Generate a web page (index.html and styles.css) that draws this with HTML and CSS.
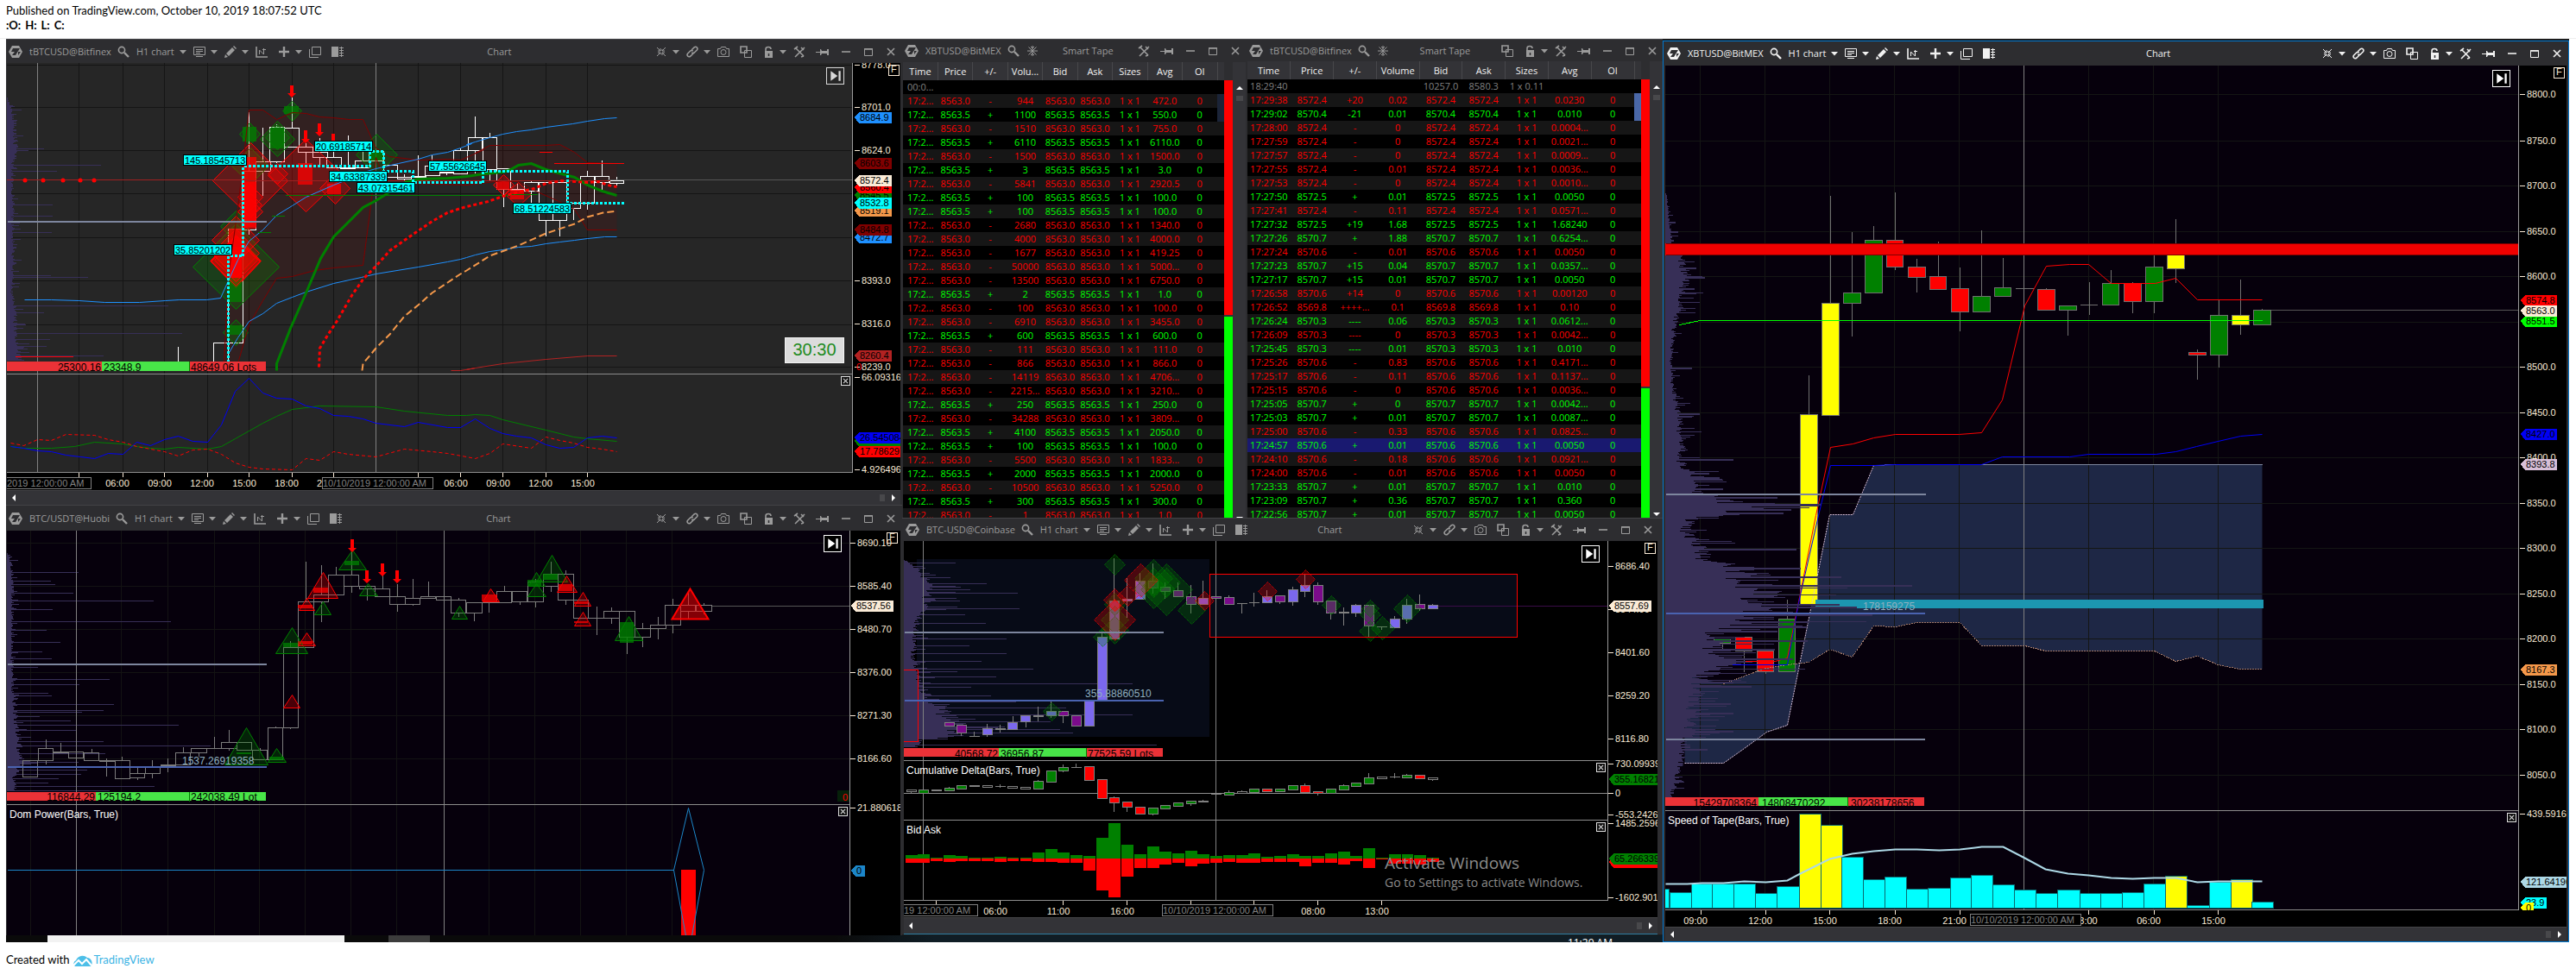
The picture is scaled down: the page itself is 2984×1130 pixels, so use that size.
FILE: index.html
```html
<!DOCTYPE html>
<html lang="en">
<head>
<meta charset="utf-8">
<title>BTC workspace</title>
<meta name="viewport" content="width=device-width, initial-scale=1">
<link rel="stylesheet" href="styles.css">
</head>
<body>
<svg class="sprite" aria-hidden="true">
  <symbol id="i-logo" viewBox="0 0 16 16"><path fill="currentColor" d="M4 1h8l4 7-4 7H4L0 8z"/><path class="cut" d="M5 4h8L8 12H4l3-4H3zM11 8h3l-3 4"/></symbol>
  <symbol id="i-search" viewBox="0 0 14 14"><circle class="st2" cx="5" cy="5" r="3.6"/><path class="st3" d="M8 8l5 5"/></symbol>
  <symbol id="i-caret" viewBox="0 0 8 14"><path fill="currentColor" d="M0 5h8L4 9.500z"/></symbol>
  <symbol id="i-screen" viewBox="0 0 14 14"><path class="st" d="M.5 1.500h13v9H.5zM3 12.500h8M3 4.500h8M3 6.500h8M3 8.500h5"/></symbol>
  <symbol id="i-pencil" viewBox="0 0 14 14"><path fill="currentColor" d="M0 14l1-4 3 3zM2 9l7-7 3 3-7 7zM10 1l1-1 3 3-1 1z"/></symbol>
  <symbol id="i-chart" viewBox="0 0 14 14"><path class="st2" d="M1 1v12h13"/><path class="st" d="M4.500 10V5l5 5V3M8 4.500h4"/></symbol>
  <symbol id="i-plus" viewBox="0 0 14 14"><path class="st3" d="M7 1v12M1 7h12"/></symbol>
  <symbol id="i-copies" viewBox="0 0 14 14"><path class="st" d="M3.500 1.500h10v9h-10zM.5 4v9.500H11"/></symbol>
  <symbol id="i-layout" viewBox="0 0 14 14"><path fill="currentColor" d="M0 1h8v12H0z"/><path class="st" d="M9 2.500h5M9 5.500h5M9 8.500h5M9 11.500h5M11.500 1v12"/></symbol>
  <symbol id="i-spark" viewBox="0 0 14 14"><path class="st" d="M2 2l4 4M12 12L8 8M12 2L8 6M2 12l4-4M6 3v3H3M8 11V8h3M8 4v2h3M6 10V8H3"/></symbol>
  <symbol id="i-link" viewBox="0 0 14 14"><path class="st2" d="M6 5l3-3q2-1.500 3.300 0t0 3l-3 3q-1.500 1-3 0M8 9l-3 3q-2 1.500-3.300 0t0-3l3-3q1.500-1 3 0"/></symbol>
  <symbol id="i-camera" viewBox="0 0 14 14"><path class="st" d="M.5 3.500h3l1-2h5l1 2h3v9H.5z"/><circle class="st" cx="7" cy="7.500" r="3"/></symbol>
  <symbol id="i-wins" viewBox="0 0 14 14"><path class="st2" d="M1 1h7v7H1z"/><path class="st" d="M5.500 5.500h8v8h-8z"/></symbol>
  <symbol id="i-lock" viewBox="0 0 14 14"><path class="st2" d="M4 7V4q0-2.500 3-2.500T10 4"/><path fill="currentColor" d="M3 6h9v8H3z"/><path class="cutst" d="M7.500 9v3"/></symbol>
  <symbol id="i-tools" viewBox="0 0 14 14"><path class="st2" d="M1 4l4-3M3 3l9 9M13 2L2 13M9 2l3 3M9 13l3-1"/></symbol>
  <symbol id="i-pin" viewBox="0 0 16 14"><path fill="currentColor" d="M0 7h5V4h1l1 2h6V4h2v7h-2V9H7l-1 2H5V8H0z"/></symbol>
  <symbol id="i-min" viewBox="0 0 14 14"><path class="st2" d="M2 7h10"/></symbol>
  <symbol id="i-max" viewBox="0 0 14 14"><path class="st" d="M2.500 3.500h9v8h-9z"/><path class="st2" d="M2 4h10"/></symbol>
  <symbol id="i-close" viewBox="0 0 14 14"><path class="st2" d="M3 3l8 8M11 3l-8 8"/></symbol>
  <symbol id="i-snow" viewBox="0 0 14 14"><path class="st" d="M7 1v12M1 7h12M2.500 2.500l9 9M11.500 2.500l-9 9M5 2l2 2 2-2M5 12l2-2 2 2"/></symbol>
  <symbol id="i-end" viewBox="0 0 14 14"><path fill="currentColor" d="M2 2l7 5-7 5zM10 2h2v10h-2z"/></symbol>
</svg>

<header class="published">
  <p>Published on TradingView.com, October 10, 2019 18:07:52 UTC</p>
  <p class="ohlc"><span>:O:</span><span>H:</span><span>L:</span><span>C:</span></p>
</header>

<main class="desktop">
  <div class="column">
    <section class="win chart-win win-bitfinex" data-chart="bitfinex" data-symbol="tBTCUSD@Bitfinex"></section>
    <section class="win chart-win win-huobi" data-chart="huobi" data-symbol="BTC/USDT@Huobi"></section>
  </div>
  <div class="column">
    <div class="tapes">
      <section class="win tape tape-bitmex" data-tape="bitmex" data-symbol="XBTUSD@BitMEX"></section>
      <section class="win tape tape-bitfinex" data-tape="bitfinex" data-symbol="tBTCUSD@Bitfinex"></section>
    </div>
    <section class="win chart-win win-coinbase" data-chart="coinbase" data-symbol="BTC-USD@Coinbase"></section>
  </div>
  <section class="win chart-win win-bitmex active" data-chart="bitmex" data-symbol="XBTUSD@BitMEX"></section>
  <div class="taskbar"><span class="search-box"></span><span class="task"></span><span class="clock">11:29 AM</span></div>
</main>

<footer class="created">Created with
  <a href="#tradingview"><svg class="cloud" viewBox="0 0 24 16" aria-hidden="true"><path d="M3 15a4 4 0 0 1 1-7 8 8 0 0 1 13-3 6 6 0 0 1 4 10z"/><path class="cloud-line" d="M1 14l6-6 4 4 5-5 6 7"/></svg>TradingView</a>
</footer>
<script src="app.js"></script>
</body>
</html>
```
FILE: styles.css
```css
* { box-sizing: border-box; }
body { margin: 0; background: #fff; font-family: "Open Sans", "Noto Sans", sans-serif; font-size: 11px; color: #000; }
p { margin: 0; }
.sprite { display: none; }
button { border: 0; padding: 0; background: none; color: inherit; font: inherit; display: flex; align-items: center; }

.published { padding: 4px 7px 6px; border-bottom: 1px solid #eee; font: 13px/17px Lato, sans-serif; }
.ohlc { font-weight: 700; display: flex; gap: 5px; }
.created { padding: 12px 7px 8px; font: 13px/17px Lato, sans-serif; display: flex; gap: 4px; }
.created a { color: #3bb3e4; text-decoration: none; display: flex; align-items: center; }
.cloud { width: 24px; height: 16px; fill: #4dbfe8; }
.cloud .cloud-line { fill: none; stroke: #fff; stroke-width: 2; }

.desktop { display: grid; grid-template-columns: 1038fr 881fr 1050fr; grid-template-rows: auto 8px; margin: 0 8px 0 7px; background: #1c1c1d; }
.column { display: flex; flex-direction: column; min-width: 0; }
.tapes { display: grid; grid-template-columns: 398fr 483fr; height: 555px; overflow: hidden; background: #3a3a3d; }

/* window frame */
.win { background: #2d2d30; border-top: 1px solid #434346; color: #9b9b9b; display: flex; flex-direction: column; min-width: 0; padding: 0 2px 0 1px; --cut: #2d2d30; }
.win.active { color: #f1f1f1; border: 1px solid #0078d0; grid-row: 1 / 3; grid-column: 3; margin-top: 2px; padding: 0 2px; }
.bar { display: flex; align-items: center; padding: 0 4px 0 2px; }
.bar .left, .bar .right { display: flex; align-items: center; gap: 12px; }
.bar .title { flex: 1; text-align: center; white-space: nowrap; line-height: 16px; }
.bar .logo { width: 16px; height: 16px; margin-right: -4px; }
.bar .symbol { white-space: nowrap; line-height: 16px; }
.bar .search { margin-left: -5px; margin-right: -4px; }
.bar .caret { margin-left: -6px; margin-right: -4px; }
.icon { width: 14px; height: 14px; display: block; color: inherit; }
.icon.narrow { width: 8px; }
.icon.wide { width: 16px; }
.icon.big { width: 16px; height: 16px; }
.st, .st2, .st3 { fill: none; stroke: currentColor; stroke-width: 1; }
.st2 { stroke-width: 1.6; }
.st3 { stroke-width: 2.4; }
.cut { fill: var(--cut); }
.cutst { stroke: var(--cut); stroke-width: 1.5; }

.win-bitfinex .bar { height: 27px; }
.win-huobi .bar { height: 29px; }
.win-coinbase .bar { height: 26px; }
.win-bitmex .bar { height: 28px; }
.win-coinbase { padding: 0 6px 0 2px; }

/* chart body */
.chart { display: grid; grid-template-columns: 1fr auto; background: #000; }
.plot { position: relative; min-width: 0; background: var(--bg); border-right: 1px solid #9a9a9a; overflow: hidden; }
.plot svg { display: block; width: 100%; height: 100%; }
.axis, .times { display: block; }
.axis { width: var(--axis); height: 100%; grid-column: 2; }
.times { width: 100%; height: 100%; grid-column: 1 / 3; }
.win-bitfinex .chart { --bg: #262626; --grid: #151515; --axis: 55px; --out: #fff; grid-template-rows: 475px 20px; }
.win-huobi .chart { --bg: #06000c; --grid: #131313; --axis: 58px; --out: #7c7c7c; grid-template-rows: 469px; }
.win-coinbase .chart { --bg: #000; --grid: #000; --axis: 57px; --out: #808080; grid-template-rows: 417px 19px; }
.win-bitmex .chart { --bg: #06000c; --grid: #141614; --axis: 55px; --out: #707070; grid-template-rows: 979px 19px; }

.end-btn, .shut, .timer { position: absolute; }
.end-btn { right: 9px; top: 5px; width: 21px; height: 20px; border: 1px solid #fff; background: #000; color: #fff; justify-content: center; }
.win-bitfinex .end-btn { background: #262626; border-color: #d8d8d8; color: #d8d8d8; }
.shut { right: 2px; width: 11px; height: 11px; border: 1px solid #ddd; color: #ddd; background: #111; justify-content: center; }
.plot .shut .icon { width: 11px; height: 11px; }
.plot .end-btn .icon { width: 16px; height: 16px; }
.shut-a { top: 363px; } .shut-b { top: 320px; } .shut-c { top: 257px; } .shut-d { top: 326px; } .shut-e { top: 866px; }
.timer { right: 9px; top: 318px; width: 69px; height: 30px; background: #dcdcdc; color: #228b22; border: 1px solid #f4f4f4; font: 20px/26px "Liberation Sans", Arial, sans-serif; text-align: center; }
.watermark { position: absolute; right: 18px; bottom: 11px; color: #8b8b8b; width: 240px; }
.watermark b { display: block; font-weight: 400; font-size: 19px; line-height: 26px; }
.watermark span { font-size: 14px; line-height: 20px; white-space: nowrap; }

.hscroll { display: flex; align-items: center; justify-content: space-between; background: #333337; border-top: 1px solid #434346; color: #fff; padding: 0 6px; height: 17px; }
.win-coinbase .hscroll { height: 20px; border-bottom: 1px solid #2a7fa5; }
.win-bitmex .hscroll { height: 17px; }
.hscroll i { margin-left: auto; width: 6px; height: 8px; background: #48484b; margin-right: 8px; }
.arrow { width: 0; height: 0; border: 4px solid transparent; }
.arrow-l { border-right-color: #fff; border-left-width: 0; }
.arrow-r { border-left-color: #fff; border-right-width: 0; }
.arrow-u { border-bottom-color: #fff; border-top-width: 0; }
.arrow-d { border-top-color: #fff; border-bottom-width: 0; }

/* drawing primitives; --c carries the colour */
svg text { font: 11px "Liberation Sans", Arial, sans-serif; fill: var(--c, #faebd7); }
svg text.t12 { font-size: 12px; }
.ln, .bx, .grid, .sess, .div { shape-rendering: crispEdges; }
.grid { stroke: var(--grid); stroke-width: 1; fill: none; }
.sess, .div { stroke: #808080; fill: none; }
.div { stroke: #8c8c8c; }
.ln { fill: none; stroke: var(--c); }
.smooth { shape-rendering: auto; }
.w2 { stroke-width: 2; } .w3 { stroke-width: 3; }
.d3 { stroke-dasharray: 4 3; } .d2 { stroke-dasharray: 3 2; } .d8 { stroke-dasharray: 8 4; } .d1 { stroke-dasharray: 2 1; }
.bx { fill: var(--c); }
.half { fill-opacity: .75; }
.frame { stroke: var(--edge, #000); }
.bar-edge { --edge: #0a6a70; }
.hollow { fill: none; stroke: var(--out); shape-rendering: crispEdges; }
.candle { fill: var(--c); stroke: var(--out); shape-rendering: crispEdges; }
.dia, .tri { fill: var(--c); fill-opacity: .27; stroke: var(--c); stroke-width: 1; }
.strong { fill-opacity: .5; stroke-width: 2; }
.dots .dia { stroke-dasharray: 1 1; }
.cloudfill { fill: #1e2745; }
.haze { fill: rgba(128, 0, 0, .13); }
.red { --c: #f00; } .green { --c: #008000; } .lime { --c: #0f0; } .cyan { --c: #0ff; } .blue { --c: #0000f5; }
.sky { --c: #1e90ff; } .maroon { --c: #800000; } .brick { --c: #b22222; } .orange { --c: #f4984a; } .cream { --c: #faebd7; }
.black { --c: #000; } .gray { --c: #808080; } .dim { --c: #555; } .yellow { --c: #ff0; } .lav { --c: #7d869e; } .indigo { --c: #4a63b0; }
.steel { --c: #8fb0c0; } .slate { --c: #7b68ee; } .purple { --c: #7b0b8b; } .thistle { --c: #d8bfd8; } .ice { --c: #add8e6; }
.azure { --c: #1c86c8; } .teal { --c: #1c96b0; } .vred { --c: #eb3237; } .vgreen { --c: #48e548; } .navy { --c: #070b17; } .plum { --c: #3a0c48; }
.prof { --c: #372f57; } .tan { --c: #a07868; } .white { --c: #fff; } .crimson { --c: #a02020; } .deepred { --c: #f00000; } .deepgreen { --c: #06200a; }

/* tapes */
.tape { padding: 0 0 0 1px; }
.tape-bitfinex { padding-left: 2px; margin-bottom: 5px; }
.tape .bar { height: 26px; padding-right: 5px; flex: none; }
.tape-bitfinex .bar { height: 25px; }
.tape .body { display: flex; flex: 1; min-height: 0; overflow: hidden; }
.tape .rows { flex: 1; min-width: 0; overflow: hidden; background: #000; }
.tape table { width: 100%; border-collapse: collapse; table-layout: fixed; font-size: 11px; text-align: center; }
.tape th { height: 21px; padding: 0; font-weight: 400; color: #f1f1f1; background: #333337; border-right: 1px solid #48484b; line-height: 20px; overflow: hidden; white-space: nowrap; text-overflow: ellipsis; }
.tape th:last-child, .tape td:last-child { width: 8px; border: 0; }
.tape td { height: 16px; padding: 0; line-height: 16px; white-space: nowrap; overflow: hidden; color: var(--c); }
.tape tbody tr:nth-child(even) { background: #161616; }
.tape tbody tr.q { --c: #808080; }
.tape tbody tr.up { --c: #0f0; }
.tape tbody tr.down { --c: #f00; }
.tape tbody tr.sel { background: #191970; }
.tape tr.mark td:last-child { background: #4a68a8; }
.tape-bitmex tr.mark td:last-child { background: #1b2438; }
.ratio { width: 10px; display: flex; flex-direction: column; gap: 2px; margin-top: 21px; background: #333337; }
.ratio .r { background: #f00; } .ratio .g { background: #0f0; }
.tape-bitmex .r { flex: 267; } .tape-bitmex .g { flex: 238; }
.tape-bitfinex .r { flex: 350; } .tape-bitfinex .g { flex: 151; }
.vscroll { width: 15px; background: #333337; display: flex; flex-direction: column; align-items: center; padding: 28px 0 6px; }
.vscroll i { width: 8px; height: 6px; background: #48484b; margin: 7px 0 auto; }

.taskbar { grid-column: 1 / 3; grid-row: 2; display: flex; overflow: hidden; background: linear-gradient(90deg, #0a0a0a 50%, #101d25 56%); padding-left: 48px; height: 8px; }
.search-box { width: 344px; background: #f2f2f2; }
.task { width: 48px; margin-left: 51px; background: #3c3c3c; }
.clock { margin-left: auto; margin-right: 58px; padding-top: 3px; color: #fff; font-size: 12px; line-height: 12px; }
```
FILE: app.js
```js
// Digitised sample spaces: [x scale, y scale, x origin, y origin].
const SPACE = {
  a: [2.8, 2.6576, 0, 0], b: [3, 2.8, 540, 40],
  c: [2.8, 2.877, 0, 585], d: [3, 2.877, 540, 585],
  e: [3, 3, 1040, 595], f: [3, 3, 1490, 595],
  g: [2.904, 2.8, 1920, 40], h: [2.882, 2.8, 2440, 40], i: [1.4737, 3, 1920, 595]
};
const X = (s, x) => Math.round(x / SPACE[s][0] + SPACE[s][2]);
const Y = (s, y) => Math.round(y / SPACE[s][1] + SPACE[s][3]);
// "a 1,2 3,4|b 5,6" -> point list
const P = spec => spec.split('|').map(part => {
  const [s, ...pts] = part.trim().split(/\s+/);
  return pts.map(p => { const [x, y] = p.split(','); return `${X(s, x) + .5},${Y(s, y) + .5}`; }).join(' ');
}).join(' ');
const line = (cls, spec) => `<polyline class="ln ${cls}" points="${P(spec)}"/>`;
const poly = (cls, spec) => `<polygon class="${cls}" points="${P(spec)}"/>`;
const box = (cls, s, x1, y1, x2, y2) => `<rect class="${cls}" x="${X(s, x1)}" y="${Y(s, y1)}" width="${X(s, x2) - X(s, x1)}" height="${Math.max(1, Y(s, y2) - Y(s, y1))}"/>`;
const text = (cls, s, x, y, t, anchor = 'start') => `<text class="${cls}" x="${X(s, x)}" y="${Y(s, y) + 4}" text-anchor="${anchor}">${t}</text>`;
const many = (list, fn) => list.trim().split(/\s+/).map(r => fn(...r.split(',').map(v => v === '' || isNaN(v) ? v : +v))).join('');
const vgrid = (cls, s, xs) => xs.map(x => `<path class="${cls}" d="M${X(s, x) + .5} 0V2000"/>`).join('');
const hgrid = (cls, s, ys) => ys.map(y => `<path class="${cls}" d="M0 ${Y(s, y) + .5}H4000"/>`).join('');
const dias = (cls, s, list) => many(list, (x, y, r, ry = r) => `<polygon class="dia ${cls}" points="${P(`${s} ${x},${y - ry} ${x + r},${y} ${x},${y + ry} ${x - r},${y}`)}"/>`);
const tris = (cls, s, list) => many(list, (x, t, b, w) => `<polygon class="tri ${cls}" points="${P(`${s} ${x},${t} ${x + w},${b} ${x - w},${b}`)}"/>`);
const blocks = (cls, s, list) => many(list, (x1, x2, y1, y2) => box('bx half ' + cls, s, x1, y1, x2, y2));
const arrows = (s, list) => many(list, (x, t, b) => { const cx = X(s, x), y1 = Y(s, t), y2 = Y(s, b); return `<path class="bx red smooth" d="M${cx - 2} ${y1}h4V${y2 - 5}h3L${cx} ${y2}l-5-5h3z"/>`; });
const COLORS = { R: 'red', G: 'green', Y: 'yellow', B: 'slate', P: 'purple' };
const candles = (s, hw, list) => many(list, (x, t, b, wt, wb, c) => {
  const cx = X(s, x) + .5, x1 = X(s, x - hw) + .5, w = X(s, x + hw) - X(s, x - hw), y1 = Y(s, t) + .5, y2 = Y(s, b) + .5;
  let o = '';
  if (wt) o += `<path class="hollow" d="M${cx} ${Y(s, wt)}V${y1}"/>`;
  if (wb) o += `<path class="hollow" d="M${cx} ${y2}V${Y(s, wb)}"/>`;
  return o + `<rect class="${c ? 'candle ' + COLORS[c] : 'hollow'}" x="${x1}" y="${y1}" width="${w}" height="${Math.max(y2 - y1, .1)}"/>`;
});
// Volume profile: envelope of [y, width] plus individual long rows
function profile(s, x0, env, spikes, thick, seed) {
  const base = X(s, x0), pts = env.split(' ').map(p => p.split(':').map(Number));
  let r = seed, d = '';
  const rnd = () => (r = (r * 16807) % 2147483647) / 2147483647;
  for (let k = 0; k < pts.length - 1; k++) {
    const [ya, wa] = pts[k], [yb, wb] = pts[k + 1];
    for (let y = ya; y < yb; y++) {
      const e = wa + (wb - wa) * (y - ya) / (yb - ya), q = rnd();
      const w = e * (q > .86 ? 1 + rnd() * .8 : .55 + q * .5);
      d += `M${base} ${y}h${w.toFixed(0)}v1H${base}z`;
    }
  }
  if (spikes) many(spikes, (sp, y, x) => { d += `M${base} ${Y(sp, y)}H${X(sp, x)}v${thick}H${base}z`; return ''; });
  return `<path class="bx prof" d="${d}"/>`;
}
const callout = (s, x1, y1, t) => `<rect class="bx cyan frame" x="${X(s, x1) + .5}" y="${Y(s, y1) + .5}" width="${t.length > 11 ? 73 : 67}" height="12"/><text class="black" x="${X(s, x1) + 2}" y="${Y(s, y1) + 11}">${t}</text>`;
const tag = (cls, s, x, y, w, t) => { const a = X(s, x), b = Y(s, y); return `<polygon class="bx ${cls}" points="${a},${b} ${a + 5},${b - 6} ${a + w},${b - 6} ${a + w},${b + 7} ${a + 5},${b + 7}"/><text class="black" x="${a + 6}" y="${b + 4}">${t}</text>`; };
const fixed = (s, x, list) => list.split(' ').map(r => { const [y, t] = r.split(','); return `<path class="ln cream" d="M${X(s, x)} ${Y(s, y) + .5}h6"/><text x="${X(s, x) + 8}" y="${Y(s, y) + 4}">${t}</text>`; }).join('');
const fbox = (s, x, y) => `<rect class="ln cream" x="${X(s, x) + .5}" y="${Y(s, y) + .5}" width="12" height="12"/><text x="${X(s, x) + 3}" y="${Y(s, y) + 9}">F</text>`;
const volume = (s, y, x1, x2, x3, x4, t1, t2, t3, c3) => box('bx vred', s, x1, y, x2, y + 30) + box('bx vgreen', s, x2, y, x3, y + 30) + box('bx ' + c3, s, x3, y, x4, y + 30)
  + `<path class="ln green" d="M${X(s, x3)}.5 ${Y(s, y)}v11"/>` + text('black t12', s, x2 - 3, y + 19, t1, 'end') + text('black t12', s, x2 + 6, y + 19, t2) + text('black t12', s, x3 + 6, y + 19, t3);
const ticks = (s, y, xs) => xs.map(x => `<path class="ln cream" d="M${X(s, x)}.5 ${Y(s, y)}v5"/>`).join('');
const labels = (s, y, list) => list.split(' ').map(r => { const [x, t] = r.split(','); return text('', s, x, y, t, 'middle'); }).join('');
const datebox = (s, x1, x2, y, t) => `<rect class="bx black" x="${X(s, x1)}" y="${Y(s, y) - 7}" width="${X(s, x2) - X(s, x1)}" height="14"/><rect class="ln gray" x="${X(s, x1) + .5}" y="${Y(s, y) - 6.5}" width="${X(s, x2) - X(s, x1)}" height="13"/>` + text('gray', s, x1 + 2, y, t);

const CHARTS = {
  bitfinex: {
    plotOrigin: [8, 73], axisOrigin: [988, 73], timeOrigin: [8, 548],
    overlay: '<button class="shut shut-a" aria-label="Close pane"><svg class="icon"><use href="#i-close"/></svg></button><div class="timer">30:30</div>',
    plot: () => vgrid('grid', 'a', [256, 397, 533, 671, 807, 945, 1082, 1356, 1493]) + vgrid('grid', 'b', [127, 275, 421])
      + hgrid('grid', 'a', [198, 330, 463, 596, 732, 865, 998, 1130])
      + profile('a', 22, '113:1 118:3 130:8 140:12 175:14 190:8 215:8 240:10 260:9 300:10 340:8 360:12 395:14 418:22', 'a,508,327 a,525,185 a,457,142 a,630,172 a,665,170 a,716,168 a,849,165 a,854,285 a,941,545 a,961,142 a,1027,592 a,1045,163 a,1067,150 a,1096,335 a,337,69', 1, 77)
      + vgrid('sess', 'a', [119, 1219])
      + poly('haze', 'a 725,1118 740,850 770,640 807,338 852,338 897,368 945,345 990,347 1035,359 1082,361 1130,368 1175,368 1219,455 1262,480 1356,492 1450,490 1493,492 1568,460|b 30,383 80,359 275,359 325,356 375,382 421,413 521,416 521,632 421,632 375,565 320,540 240,506 180,475 127,473 80,474 0,488|a 1219,560 1205,610 1175,817 1082,823 1020,831 945,851 897,855 850,925 807,1000 770,1118')
      + candles('a', 23, '715,1056,1125,, 763,703,1056,, 807,525,706,345,722 852,498,525,393,603 897,390,496,383,503 945,394,453,300, 990,453,468,440,505 1037,468,485,425,510 1082,485,516,430, 1127,516,518,418, 1175,493,516,450, 1219,466,493,, 1265,508,545,, 1310,545,549,538,556 1356,542,546,478,550 1401,510,540,478, 1447,530,531,,540 1493,463,533,458,538 1541,423,463,360,533')
      + candles('b', 24, '31,334,376,267, 80,334,437,320,472 128,435,501,,560 177,501,503,484, 226,480,508,475,548 275,480,603,,655 325,480,603,,655 373,545,564,,602 421,458,545,443,568 472,458,480,409,510 521,472,482,462,490')
      + '<path class="ln white" d="M206.500 402V419"/>'
      + dias('green', 'a', '763,820,140,132 809,412,34,35 899,427,57,55 899,422,40,38 947,341,31,30 1221,475,67,62 763,697,50,48 763,1023,41,40 811,510,60,55 763,790,70,66')
      + dias('red', 'a', '763,803,83,80 763,738,78,73 763,778,78,75 763,806,80,78 811,555,122,116 811,607,40,38 811,650,40,38 811,630,38,36 992,540,123,112 900,535,32,32 1085,580,50,48')
      + dias('red', 'b', '130,488,36,34 180,518,44,38')
      + blocks('green', 'a', '787,831,390,435 876,920,394,458 922,968,326,352 1197,1243,463,493 740,784,1003,1030 740,784,855,930')
      + blocks('red', 'a', '741,784,703,855 787,831,483,703 967,1013,502,570 1060,1105,565,597 741,784,760,855 787,831,560,700') + blocks('red', 'b', '104,151,475,503 152,200,503,535')
      + dias('red', 'a', '763,803,80,77 763,800,70,66')
      + line('maroon smooth', 'a 725,1118 740,850 770,640 807,338 852,338 897,368 945,345 990,347 1035,359 1082,361 1130,368 1175,368 1219,455 1262,480 1356,492 1450,490 1493,492 1568,460|b 30,383 80,359 275,359 325,356 375,382 421,413 521,416')
      + line('maroon smooth', 'a 770,1118 807,1000 850,925 897,855 945,851 1020,831 1082,823 1175,817 1205,610 1219,485 1250,560|b 0,488 127,473 180,475 240,506 320,540 375,565 421,632 521,632')
      + line('sky smooth', 'a 78,923 165,923 255,926 340,931 450,931 535,926 580,921 670,921 715,916 740,865 770,800 807,741 850,706 897,662 945,633 990,607 1082,568 1130,550 1180,530 1219,518 1290,503 1356,488 1400,475 1450,468 1493,454 1530,440|b 0,356 30,346 80,332 127,321 175,314 225,307 275,299 370,288 421,279 480,271 521,268')
      + line('sky smooth', 'a 742,1085 770,1040 807,988 850,965 897,932 945,915 990,897 1082,873 1170,853 1219,842 1356,821 1450,806 1493,797|b 0,721 30,713 80,703 127,696 180,688 225,685 275,677 325,671 375,667 421,662 480,656 521,654')
      + line('crimson', 'a 22,554 1568,556|b 497,472') + line('dim', 'b 490,471 1345,471') + line('lav w2', 'a 22,681 863,681')
      + [80, 141, 203, 259, 304].map(x => `<circle class="bx red smooth" cx="${X('a', x)}" cy="209" r="2.500"/>`).join('')
      + line('green', 'a 925,600 1568,600|b 250,519') + line('green', 'a 878,665 920,665') + line('green', 'a 833,716 875,716')
      + line('green w3 smooth', 'a 895,1140 897,1118 940,1010 990,900 1040,795 1082,727 1130,680 1175,637 1219,616 1262,590') + line('green w3 smooth', 'a 1310,560 1356,550 1450,547|b 0,459 60,452 127,444 152,438 180,424 225,418 275,436 330,452 375,463 421,487 470,508 521,521')
      + line('red w3 d3 smooth', 'a 1032,1130 1035,1070 1060,1030 1090,990 1140,910 1180,855 1219,818 1262,772 1310,738 1356,710 1400,680 1450,655 1493,640|b 0,557 75,540 127,523 180,510 235,497 275,481 330,472 375,475 421,480 460,475 490,488 521,494')
      + line('orange w2 d8 smooth', 'a 1172,1140 1175,1118 1219,1072 1262,1028 1310,973 1356,937 1400,900 1450,870 1493,842|b 0,765 80,717 180,682 275,643 375,612 421,592 475,576 521,570')
      + line('brick smooth', 'a 1462,1141 1493,1141 1540,1132|b 0,1086 30,1080 127,1068 275,1054 421,1042 521,1041')
      + line('red', 'b 252,381 298,381') + line('red', 'b 303,418 545,418') + line('red', 'a 48,1098 235,1098')
      + line('cyan w3 d2', 'a 740,1113 740,786 788,786 788,510 1197,510 1197,465 1243,465 1243,525 1337,525 1337,560|b 0,478 58,478 58,441 352,441 352,545 545,545')
      + arrows('a', '945,262,300 990,402,440 1037,380,420 1082,413,450')
      + callout('a', 594, 475, '145.18545713') + callout('a', 562, 751, '35.85201202') + callout('a', 1020, 432, '20.69185714') + callout('a', 1066, 525, '34.63387339') + callout('a', 1157, 560, '43.07315461') + callout('a', 1389, 493, '57.55626645') + callout('b', 161, 546, '68.51224583')
      + volume('a', 1113, 22, 331, 612, 863, '25300.16', '23348.9', '48649.06 Lots', 'vred')
      + hgrid('div', 'a', [1151])
      + line('green smooth', 'a 33,1373 75,1380 165,1380 240,1373 304,1362 397,1365 441,1373 487,1380 533,1381 578,1376 671,1381 716,1373 762,1349 807,1325 852,1302 897,1280 945,1261 1035,1248 1219,1253 1310,1266 1450,1279|b 0,1235 31,1233 80,1236 127,1250 275,1283 373,1306 421,1311 521,1318')
      + line('blue smooth', 'a 33,1373 75,1379 119,1388 165,1391 213,1400 260,1406 304,1410 350,1395 397,1399 441,1362 487,1372 533,1352 578,1341 625,1358 671,1362 716,1308 762,1204 807,1163 852,1208 897,1226 945,1227 990,1248 1035,1256 1082,1277 1127,1280 1175,1290 1219,1301 1310,1314 1356,1299 1450,1316 1493,1316|b 31,1247 80,1276 127,1293 175,1303 226,1307 275,1330 325,1340 373,1339 421,1307 470,1301 521,1307')
      + line('red d3 smooth', 'a 33,1363 75,1370 119,1352 165,1356 213,1336 304,1340 350,1354 397,1360 441,1373 487,1382 533,1391 578,1402 625,1384 671,1381 716,1399 762,1424 807,1437 852,1442 945,1447 990,1412 1035,1416 1082,1391 1127,1399 1219,1405 1310,1381 1400,1391 1450,1394|b 0,1368 31,1374 80,1357 127,1326 226,1340 275,1304 325,1317 373,1323 421,1337 470,1345 521,1352')
      + '<path class="div" d="M0 547.500H4000"/>',
    axis: () => fixed('b', 1349, '97,8778.0 236,8701.0 376,8624.0 799,8393.0 939,8316.0 1079,8239.0 1112,66.09316 1411,4.926496') + text('red', 'b', 1355, 1077, '0') + fbox('b', 1466, 98)
      + tag('sky', 'b', 1350, 269, 43, '8684.9') + tag('maroon', 'b', 1350, 418, 43, '8603.6') + tag('green', 'b', 1350, 520, 43, '8545.5') + tag('red', 'b', 1350, 496, 43, '8560.4') + tag('orange', 'b', 1350, 572, 43, '8519.1') + tag('cyan', 'b', 1350, 547, 43, '8532.8') + tag('cream', 'b', 1350, 473, 43, '8572.4')
      + tag('sky', 'b', 1350, 657, 43, '8472.7') + tag('maroon', 'b', 1350, 633, 43, '8484.8') + tag('brick', 'b', 1350, 1041, 43, '8260.4')
      + tag('green', 'b', 1350, 1318, 60, '') + tag('blue', 'b', 1350, 1307, 60, '26.545084') + tag('red', 'b', 1350, 1353, 60, '17.786297'),
    times: () => ticks('a', 1456, [256, 397, 533, 671, 807, 945, 1082, 1356, 1493]) + ticks('b', 1422, [127, 275, 421])
      + labels('a', 1488, '380,06:00 518,09:00 655,12:00 792,15:00 929,18:00 1037,2 1478,06:00') + labels('b', 1456, '111,09:00 258,12:00 405,15:00')
      + datebox('a', 20, 293, 1487, '2019 12:00:00 AM') + datebox('a', 1045, 1402, 1487, '10/10/2019 12:00:00 AM')
  },
  huobi: {
    plotOrigin: [8, 615], axisOrigin: [985, 615],
    overlay: '<button class="shut shut-b" aria-label="Close pane"><svg class="icon"><use href="#i-close"/></svg></button>',
    plot: () => vgrid('grid', 'c', [97, 393, 544, 693, 841, 989, 1138, 1286]) + vgrid('grid', 'd', [79, 238, 397, 556, 715]) + hgrid('grid', 'd', [127, 271, 415, 559, 703, 847])
      + profile('c', 22, '641:2 655:7 670:8 690:9 720:8 760:8 800:9 830:14 860:18 885:22 900:10 917:14', 'c,185,58 c,225,254 c,254,165 c,266,178 c,294,238 c,320,497 c,349,170 c,389,553 c,418,152 c,458,195 c,488,137 c,513,168 c,542,122 c,582,355 c,597,257 c,626,158 c,637,168 c,665,369 c,686,335 c,691,265 c,706,128 c,720,229 c,735,579 c,750,245 c,789,335 c,803,682 c,829,342 c,856,254 c,883,282 c,899,262 c,913,189 c,927,158 c,939,500 c,952,355', 1, 913)
      + vgrid('sess', 'c', [245, 1438])
      + candles('c', 24, '97,853,907,, 147,812,853,783,865 195,823,825,793, 245,823,842,, 296,825,853,813, 345,853,853.500,847,905 395,853,911,840, 444,896,908,873,917 494,873,896,852,912 544,867,867.500,847,892 593,827,867,808, 644,810,827,,840 693,810,810.500,773, 742,792,810,751,820 792,792,818,, 842,818,848,812, 892,743,848,739, 941,476,743,455,748 991,323,476,190, 1041,300,323,202,390 1089,234,300,208, 1139,234,269,150,293 1190,269,280,,318 1239,280,304,235,308 1288,304,332,265,357 1338,312,332,248,338 1388,304,312,257, 1438,306,317,, 1486,317,361,311,375 1537,326,361,,387')
      + candles('d', 26, '79,326,326.500,,360 131,287,326,271, 185,287,321,,334 240,255,321,248,342 293,231,269,190,291 345,231,316,220,333 398,316,376,, 453,376,376.500,340,434 504,353,376,342,397 558,353,441,,498 612,412,441,394,475 666,399,410,375,449 717,335,399,314,429 770,335,353,290,380 825,335,353,328,365')
      + line('dim', 'd 851,336 1333,336')
      + blocks('green', 'c', '1116,1164,186,200 917,965,459,475 873,920,840,852 768,816,825,832') + blocks('red', 'c', '1017,1065,275,293 967,1013,335,346 967,1013,455,466') + blocks('green', 'd', '533,583,390,460 214,262,250,270 268,319,231,250') + blocks('red', 'd', '55,108,300,321 320,370,266,288 375,422,322,330 375,422,387,394')
      + tris('green', 'c', '1143,150,217,45 1194,262,303,29 945,408,496,51 1046,322,364,26 797,743,867,70 897,810,856,29 1490,336,379,26') + tris('red', 'c', '1046,223,312,50 995,310,352,25 995,425,470,28 945,632,675,26')
      + tris('green', 'd', '298,166,255,54 244,225,271,29 244,262,304,31 563,371,451,48') + tris('red', 'd', '85,278,321,28 349,235,290,34 404,292,336,28 404,358,402,28') + tris('red strong', 'd', '776,279,381,63')
      + arrows('c', '1141,116,157 1190,220,263 1241,197,240 1289,220,263')
      + line('lav w2', 'c 22,529 863,529') + line('indigo w2', 'c 22,871 863,871') + text('steel t12', 'c', 590, 854, '1537.26919358')
      + volume('c', 957, 22, 310, 612, 863, '116844.29', '125194.2', '242038.49 Lot', 'vgreen')
      + box('bx deepgreen', 'd', 1291, 953, 1331, 990) + text('red', 'd', 1307, 974, '0')
      + hgrid('div', 'c', [999]) + text('white t12', 'c', 30, 1032, 'Dom Power(Bars, True)')
      + line('azure', 'c 22,1218|d 720,1218') + box('bx red', 'd', 748, 1217, 797, 1450) + line('azure smooth', 'd 762,1436 720,1218 772,1010 826,1218 784,1436'),
    axis: () => fixed('d', 1335, '127,8690.10 271,8585.40 415,8480.70 559,8376.00 703,8271.30 847,8166.60 1011,21.880618') + fbox('d', 1462, 93)
      + tag('cream', 'd', 1337, 336, 49, '8537.56') + tag('azure', 'd', 1337, 1219, 16, '0')
  },
  coinbase: {
    plotOrigin: [1047, 627], axisOrigin: [1863, 627], timeOrigin: [1047, 1044],
    overlay: '<button class="shut shut-c" aria-label="Close pane"><svg class="icon"><use href="#i-close"/></svg></button><button class="shut shut-d" aria-label="Close pane"><svg class="icon"><use href="#i-close"/></svg></button><p class="watermark"><b>Activate Windows</b><span>Go to Settings to activate Windows.</span></p>',
    plot: () => box('bx navy', 'e', 67, 160, 1084, 778) + poly('bx navy', 'e 1084,211|f 800,211 800,430|e 1084,430')
      + profile('e', 21, '649:2 655:12 665:26 672:38 685:36 695:38 705:36 715:22 745:16 765:14 785:24 800:30 825:60 840:80 852:88 857:30 866:22', 'e,172,200 e,223,183 e,244,308 e,265,253 e,277,416 e,295,205 e,331,422 e,352,235 e,382,305 e,411,353 e,436,377 e,460,248 e,487,377 e,514,290 e,541,470 e,550,208 e,568,343 e,592,815 e,604,254 e,634,323 e,655,410 e,676,585 e,700,815 e,715,270 e,724,530 e,751,565 e,763,610 e,805,900', 1, 4242)
      + vgrid('sess', 'e', [88, 1105])
      + candles('e', 16, '178,727,737,,,P 220,736,762,,773,P 265,773,773.500,760,,P 310,748,767,733,776,B 355,748,748.500,736,762,P 398,727,750,706,,B 443,703,724,,744,B 487,703,703.500,673,724,P 532,688,703,649,712,B 574,688,703,,728,P 619,703,737,,,P 664,649,737,,,B 709,430,648,412,651,B 751,304,436,157,,B 796,297,304,225,362,B 841,235,297,208,,B 886,235,258,173,280,P 928,256,269,240,297,P 973,268,288,240,292,P 1018,287,314,250,348,P 1060,294,314,234,318,B 1105,287,294,,,P 1150,291,314,285,,P 1195,312,312.500,,347,P 1237,308,308.500,276,324,P 1282,287,308,266,,B 1327,286,305,,315,P')
      + candles('f', 16, '22,265,305,256,320,B 64,250,269,210,291,B 109,250,305,240,317,P 154,304,344,,368,P 199,343,343.500,328,389,P 241,319,344,315,360,B 286,319,391,,430,P 331,392,393,,405,P 376,367,395,358,,B 418,317,367,298,385,B 463,316,331,281,338,P 508,319,331,315,,B')
      + line('plum', 'f 525,320 1118,320')
      + '<g class="dots">' + dias('green', 'e', '754,178,36 754,315,38 754,405,48 754,370,48 711,430,33 889,224,66 889,260,70 889,248,36 932,265,90 932,240,50 1020,337,48 535,688,31') + dias('red', 'e', '754,300,40 754,320,20 754,370,72 844,232,59 798,285,37 1064,303,33 1285,270,33')
      + dias('red', 'f', '67,227,33') + dias('green', 'f', '157,319,33 290,331,30 290,352,36 290,408,37 334,398,40 421,331,48') + '</g>'
      + line('red', 'e 0,544 68,544 68,793 0,793') + line('red', 'e 1084,430 1084,211|f 800,211 800,430|e 1084,430')
      + line('lav w2', 'e 21,411 922,411') + line('indigo w2', 'e 21,648 922,648') + text('steel t12', 'e', 650, 628, '355.88860510')
      + volume('e', 817, 21, 352, 654, 922, '40568.72', '36956.87', '77525.59 Lots', 'vred')
      + hgrid('div', 'e', [859, 973, 1066]) + text('white t12', 'e', 29, 893, 'Cumulative Delta(Bars, True)') + text('white t12', 'e', 29, 1100, 'Bid Ask')
      + candles('e', 16, '46,961,965,,972 88,961,972,,,G 133,961,961.500,, 178,954,962,950,,G 220,945,956,,,G 265,946,946.500,,950 310,946,950,, 355,948,949,942,953 398,949,953,, 443,952,956,, 487,930,956,926,961,G 532,894,932,,,G 574,882,895,873,900,G 619,881,882,870, 664,880,926,,930,R 709,925,989,,,R 751,987,1004,984,1038,R 796,1002,1021,,1038,R 841,1021,1043,,,R 886,1023,1043,,1050,G 928,1015,1026,,1030,G 973,1006,1017,,,G 1018,1000,1008,,1017,G 1060,1000,1000.500,995,1005 1105,975,976,, 1150,969,977,963,,G 1195,967,972,963, 1237,958,968,,972,G 1282,958,966,,970,R 1327,958,965,,970,G')
      + candles('f', 16, '22,946,960,,,G 64,945,968,939,972,R 109,967,972,,981,R 154,958,972,,,G 199,945,960,942,,G 241,937,948,,,G 286,918,938,904,,G 331,915,920,, 376,915,916,902,922 418,909,917,906,,G 463,909,920,,923,R 508,918,923,,930')
      + many('e,48,1189,1216 e,90,1184,1216 e,135,1198,1208 e,180,1189,1211 e,222,1192,1209 e,267,1198,1209 e,312,1198,1209 e,357,1195,1211 e,400,1198,1209 e,445,1198,1209 e,489,1180,1211 e,534,1168,1213 e,576,1180,1216 e,621,1189,1214 e,666,1192,1241 e,711,1129,1312 e,753,1078,1336 e,798,1153,1262 e,843,1186,1232 e,888,1159,1234 e,930,1177,1222 e,975,1183,1216 e,1020,1174,1226 e,1062,1186,1219 e,1107,1192,1214 e,1152,1189,1211 e,1197,1189,1216 e,1239,1183,1216 e,1284,1195,1213 e,1329,1192,1211 f,24,1186,1211 f,66,1192,1226 f,111,1192,1216 f,156,1183,1214 f,201,1177,1220 f,243,1192,1208 f,288,1165,1232 f,333,1198,1204 f,378,1186,1219 f,421,1186,1219 f,465,1189,1220 f,510,1198,1211', (s, x, t, b) => box('bx green', s, x - 20, t, x + 20, 1201) + box('bx red', s, x - 20, 1201, x + 20, b))
      + hgrid('div', 'e', [1345]),
    axis: () => fixed('f', 1120, '184,8686.40 334,8544.00 484,8401.60 634,8259.20 784,8116.80 871,730.09939 973,0 1048,-553.2426 1078,1485.2596 1336,-1602.901') + fbox('f', 1246, 103)
      + tag('cream', 'f', 1122, 321, 49, '8557.69') + tag('green', 'f', 1122, 925, 60, '355.16821') + tag('red', 'f', 1122, 1212, 60, '') + tag('green', 'f', 1122, 1199, 60, '65.266339'),
    times: () => ticks('e', 1347, [133, 355, 574, 796, 1018, 1237]) + ticks('f', 1347, [109, 331]) + labels('e', 1383, '339,06:00 558,11:00 780,16:00') + labels('f', 1383, '93,08:00 315,13:00')
      + datebox('e', 18, 275, 1381, '19 12:00:00 AM') + datebox('e', 919, 1301, 1381, '10/10/2019 12:00:00 AM')
  },
  bitmex: {
    plotOrigin: [1929, 76], axisOrigin: [2918, 76], timeOrigin: [1929, 1055],
    overlay: '<button class="shut shut-e" aria-label="Close pane"><svg class="icon"><use href="#i-close"/></svg></button>',
    plot: () => poly('cloudfill', 'i 46,868 112,868 148,815 185,758 221,736 294,4 333,4|g 725,1398 800,1393|h 518,1393|i 1031,541 994,539 957,526 921,496 884,512 847,478 662,478 626,460 553,460 516,379 442,379 405,394 368,391 332,499 294,472 258,517 221,526 184,538 112,592 46,560')
      + vgrid('grid', 'g', [143, 361, 579, 797, 1014, 1450]) + vgrid('grid', 'h', [157, 373]) + hgrid('grid', 'g', [194, 343, 491, 637, 785, 931, 1079, 1225, 1373, 1521]) + hgrid('grid', 'i', [121, 280, 436, 595, 751, 910])
      + vgrid('sess', 'g', [1232])
      + candles('g', 28, '508,1233,1850,1106,,Y 581,870,1234,524,,Y 653,838,870,642,979,G 726,667,838,622,,G 798,667,754,513,764,R 871,754,786,729,837,R 943,785,825,672,,R 1016,824,898,757,963,R 1089,847,898,636,,G 1161,821,847,726,,G 1234,822,823,, 1307,827,892,823,896,R 1379,878,892,,977,G 1451,876,877,803,909 1524,805,875,765,,G')
      + candles('h', 28, '86,807,864,803,904,R 158,754,864,717,904,G 230,712,758,599,806,Y 302,1031,1038,1022,1120,R 375,911,1038,862,1081,G 447,911,940,795,974,Y 519,894,940,890,944,G')
      + candles('i', 14, '110,434,450,,476,G 147,430,478,,553,R 184,478,548,,557,R 221,365,548,300,,G')
      + box('bx teal', 'i', 270, 301, 1034, 331)
      + line('tan d1', 'i 112,592 184,538 221,526 258,517 294,472 332,499 368,391 405,394 442,379 516,379 553,460 626,460 662,478 847,478 884,512 921,496 957,526 994,539 1031,541')
      + line('thistle d1 smooth', 'i 46,868 112,868 148,815 185,758 221,736 294,4 333,4|g 725,1398') + line('lav', 'g 725,1396 800,1393|h 518,1393')
      + line('red smooth', 'i 95,532 112,514 200,514 221,500 236,350|g 530,1560 580,1339 655,1326 725,1307 800,1295 1014,1295 1090,1290 1160,1184 1234,880 1307,749 1385,746 1450,746 1524,807|h 160,807 230,789 304,860 518,860')
      + line('blue smooth', 'i 100,526 221,526 240,310|g 541,1560 580,1398 725,1398 800,1393 1090,1393 1160,1370 1385,1370 1450,1362|h 165,1362 230,1351 300,1336 373,1320 447,1301 518,1295')
      + profile('g', 26, '224:2 240:4 270:9 285:14 300:24 320:34 335:26 360:22 375:14 400:10 430:9 450:12 475:20 500:24 520:30 533:22 545:36 555:50 570:56 576:85 590:120 596:100 600:40 615:30 630:50 650:60 657:120 675:130 690:150 700:130 710:165 722:135 733:75 745:70 755:78 765:120 775:90 785:55 800:48 830:40 850:36 875:26 895:18 910:14 924:8', 'g,608,60 g,638,70 g,757,130 g,787,160 g,823,125 g,1081,115 g,1228,142 g,1377,255 g,1421,175 g,1437,208 g,1474,222 g,1500,403 g,1522,548 g,1541,450 g,1552,424 i,124,238 i,190,244 i,218,314 i,250,435 i,314,311 i,324,340 i,352,367 i,376,260 i,392,255 i,408,205 i,441,257 i,472,200 i,503,232 i,513,150 i,600,160 i,661,125 i,693,130 i,755,130 i,819,85', 2, 555)
      + line('lime', 'g 72,942 143,928|h 518,928') + line('dim', 'h 547,894 1379,894')
      + '<rect class="bx deepred" x="1929" y="282" width="2000" height="14"/>' + line('maroon', 'g 26,677 4000,677') + line('maroon', 'g 26,714 4000,714')
      + line('lav w2', 'g 26,1489 899,1489') + line('lav w2', 'i 14,783 456,783') + line('indigo w2', 'i 14,345 456,345') + text('steel t12', 'i', 351, 325, '178159275')
      + volume('i', 988, 14, 173, 324, 456, '15429708364', '14808470292', '30238178656', 'vred')
      + hgrid('div', 'i', [1033]) + text('white t12', 'i', 17, 1068, 'Speed of Tape(Bars, True)')
      + many('-18,1306 20,1318 57,1287 93,1287 130,1288 167,1321 204,1297 241,1045,Y 278,1084,Y 314,1195 351,1273 388,1264 425,1306 462,1303 499,1267 535,1258 572,1291 609,1309 646,1321 683,1309 720,1321 756,1321 793,1318 830,1288 867,1261,Y 904,1363 941,1282 978,1273,Y 1014,1351', (x, t, c) => `<rect class="bx frame bar-edge ${c ? 'yellow' : 'cyan'}" x="${X('i', x)}.5" y="${Y('i', t)}.5" width="${X('i', x + 37) - X('i', x)}" height="${Y('i', 1370) - Y('i', t)}"/>`)
      + line('ice w2 smooth', 'i 14,1286 50,1287 75,1285 112,1285 148,1277 184,1282 221,1276 240,1254 258,1236 294,1200 332,1182 368,1174 405,1168 442,1168 480,1171 516,1168 553,1159 589,1159 626,1198 662,1235 700,1252 736,1258 773,1267 810,1270 847,1267 884,1267 921,1282 957,1278 1031,1278')
      + '<path class="div" d="M0 1054.500H4000"/>',
    axis: () => fixed('h', 1381, '194,8800.0 343,8750.0 491,8700.0 637,8650.0 785,8600.0 1079,8500.0 1225,8450.0 1373,8400.0 1521,8350.0') + fixed('i', 1472, '121,8300.0 280,8250.0 436,8200.0 595,8150.0 751,8100.0 910,8050.0 1045,439.5916') + fbox('h', 1494, 107)
      + tag('red', 'h', 1384, 862, 42, '8574.8') + tag('lime', 'h', 1384, 930, 42, '8551.5') + tag('cream', 'h', 1384, 896, 42, '8563.0') + tag('blue', 'h', 1384, 1296, 42, '8427.0') + tag('thistle', 'h', 1384, 1395, 42, '8393.8')
      + tag('orange', 'i', 1474, 543, 42, '8167.3') + tag('ice', 'i', 1474, 1280, 60, '121.64190') + tag('cyan', 'i', 1474, 1353, 30, '23.9') + tag('yellow', 'i', 1474, 1371, 15, '0'),
    times: () => ticks('i', 1381, [73, 184, 294, 405, 516, 736, 847, 957]) + labels('i', 1416, '65,09:00 175,12:00 286,15:00 397,18:00 507,21:00 735,3:00 838,06:00 949,15:00') + datebox('i', 533, 722, 1414, '10/10/2019 12:00:00 AM')
  }
};

const icon = (id, extra = '') => `<svg class="icon ${extra}"><use href="#i-${id}"/></svg>`;
const btn = (id, label, cls = '', size = '') => `<button class="${cls}" aria-label="${label}">${icon(id, size)}</button>`;
const caret = () => btn('caret', 'More', 'caret', 'narrow');
const head = (symbol, left, title, right) => `<div class="bar"><div class="left"><svg class="icon big logo"><use href="#i-logo"/></svg><span class="symbol">${symbol}</span>${btn('search', 'Find symbol', 'search')}${left}</div><span class="title">${title}</span><div class="right">${right}${btn('tools', 'Settings')}${btn('pin', 'Pin', '', 'wide')}${btn('min', 'Minimize')}${btn('max', 'Maximize')}${btn('close', 'Close')}</div></div>`;
const lock = () => btn('wins', 'Duplicate') + btn('lock', 'Lock') + caret();
const svg = (cls, o, inner) => `<svg class="${cls}"><g transform="translate(${-o[0]} ${-o[1]})">${inner}</g></svg>`;

document.querySelectorAll('[data-chart]').forEach(el => {
  const c = CHARTS[el.dataset.chart];
  const left = `<button class="symbol">H1 chart</button>${caret()}${btn('screen', 'Chart type')}${caret()}${btn('pencil', 'Draw')}${caret()}${btn('chart', 'Indicators')}${btn('plus', 'Add')}${caret()}${btn('copies', 'Templates')}${btn('layout', 'Layout')}`;
  const right = btn('spark', 'Center') + caret() + btn('link', 'Link') + caret() + btn('camera', 'Screenshot') + lock();
  el.innerHTML = head(el.dataset.symbol, left, 'Chart', right)
    + `<div class="chart"><div class="plot">${svg('', c.plotOrigin, c.plot())}<button class="end-btn" aria-label="Go to last bar">${icon('end')}</button>${c.overlay}</div>${svg('axis', c.axisOrigin, c.axis())}${c.times ? svg('times', c.timeOrigin, c.times()) : ''}</div>`
    + (c.times ? '<div class="hscroll"><span class="arrow arrow-l"></span><i></i><span class="arrow arrow-r"></span></div>' : '');
});

const bitmexRows = '-|944|472.0 +|1100|550.0 -|1510|755.0 +|6110|6110.0 -|1500|1500.0 +|3|3.0 -|5841|2920.5 +|100|100.0 +|100|100.0 -|2680|1340.0 -|4000|4000.0 -|1677|419.25 -|50000|5000... -|13500|6750.0 +|2|1.0 -|100|100.0 -|6910|3455.0 +|600|600.0 -|111|111.0 -|866|866.0 -|14119|4706... -|2215...|3210... +|250|250.0 -|34288|3809... +|4100|2050.0 +|100|100.0 -|5500|1833... +|2000|2000.0 -|10500|5250.0 +|300|300.0 -|1|1.0'
  .split(' ').map(r => { const [s, v, a] = r.split('|'), p = s === '+' ? '8563.5' : '8563.0'; return [s === '+' ? 'up' : 'down', '17:2...', p, s, v, p, p, '1 x 1', a, '0']; });
const bitfinexRows = 'd|29:38|8572.4|+20|0.02|0.0230 u|29:02|8570.4|-21|0.01|0.010 d|28:00|8572.4|-|0|0.0004... d|27:59|8572.4|-|0|0.0021... d|27:57|8572.4|-|0|0.0009... d|27:55|8572.4|-|0.01|0.0036... d|27:53|8572.4|-|0|0.0010... u|27:50|8572.5|+|0.01|0.0050 d|27:41|8572.4|-|0.11|0.0571... u|27:32|8572.5|+19|1.68|1.68240 u|27:26|8570.7|+|1.88|0.6254... d|27:24|8570.6|-|0.01|0.0050 u|27:23|8570.7|+15|0.04|0.0357... u|27:17|8570.7|+15|0.01|0.0050 d|26:58|8570.6|+14|0|0.00120 d|26:52|8569.8|++++...|0.1|0.10 u|26:24|8570.3|----|0.06|0.0612... d|26:09|8570.3|----|0|0.0042... u|25:45|8570.3|----|0.01|0.010 d|25:26|8570.6|-|0.83|0.4171... d|25:17|8570.6|-|0.11|0.1137... d|25:15|8570.6|-|0|0.0036... u|25:05|8570.7|+|0|0.0042... u|25:03|8570.7|+|0.01|0.0087... d|25:00|8570.6|-|0.33|0.0825... s|24:57|8570.6|+|0.01|0.0050 d|24:10|8570.6|-|0.18|0.0921... d|24:00|8570.6|-|0.01|0.0050 u|23:33|8570.7|+|0.01|0.010 u|23:09|8570.7|+|0.36|0.360 u|22:56|8570.7|+|0.01|0.0050'
  .split(' ').map(r => { const [k, t, p, pm, v, a] = r.split('|'); return [{ d: 'down', u: 'up', s: 'up sel' }[k], '17:' + t, p, pm, v, p, p, '1 x 1', a, '0']; });
const TAPES = {
  bitmex: { rows: [['q', '00:0...', '', '', '', '', '', '', '', ''], ...bitmexRows], volume: 'Volu...', right: '' },
  bitfinex: { rows: [['q', '18:29:40', '', '', '', '10257.0', '8580.3', '1 x 0.11', '', ''], ...bitfinexRows], volume: 'Volume', right: lock() }
};
document.querySelectorAll('[data-tape]').forEach(el => {
  const t = TAPES[el.dataset.tape];
  const ths = ['Time', 'Price', '+/-', t.volume, 'Bid', 'Ask', 'Sizes', 'Avg', 'OI', ''].map(h => `<th>${h}</th>`).join('');
  const trs = t.rows.map((r, i) => `<tr class="${r[0]}${i === 1 || i === 2 ? ' mark' : ''}">${r.slice(1).map(v => `<td>${v}</td>`).join('')}<td></td></tr>`).join('');
  el.innerHTML = head(el.dataset.symbol, btn('snow', 'Freeze'), 'Smart Tape', t.right)
    + `<div class="body"><div class="rows"><table><thead><tr>${ths}</tr></thead><tbody>${trs}</tbody></table></div><div class="ratio"><div class="r"></div><div class="g"></div></div><div class="vscroll"><span class="arrow arrow-u"></span><i></i><span class="arrow arrow-d"></span></div></div>`;
});
```
